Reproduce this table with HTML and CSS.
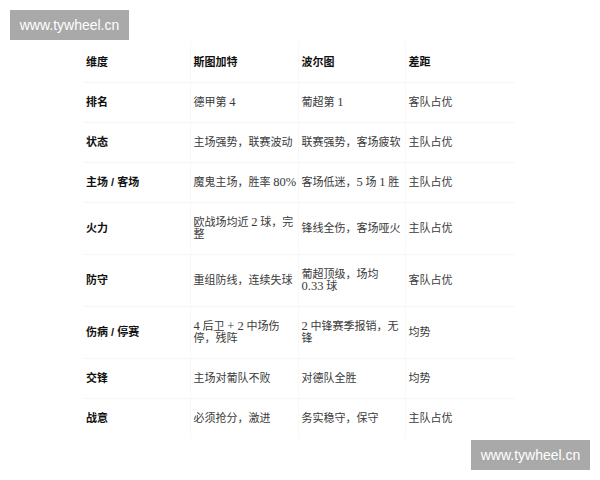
FILE: index.html
```html
<!DOCTYPE html>
<html lang="zh">
<head>
<meta charset="utf-8">
<title>斯图加特 vs 波尔图</title>
<link rel="stylesheet" href="styles.css">
</head>
<body>
<div class="page">
  <table class="compare">
    <colgroup>
      <col class="c1"><col class="c2"><col class="c3"><col class="c4">
    </colgroup>
    <thead>
      <tr><th>维度</th><th>斯图加特</th><th>波尔图</th><th>差距</th></tr>
    </thead>
    <tbody>
      <tr><th>排名</th><td>德甲第 <span class="num">4</span></td><td>葡超第 <span class="num">1</span></td><td>客队占优</td></tr>
      <tr><th>状态</th><td>主场强势，联赛波动</td><td>联赛强势，客场疲软</td><td>主队占优</td></tr>
      <tr><th>主场 / 客场</th><td>魔鬼主场，胜率 <span class="num">80%</span></td><td>客场低迷，<span class="num">5</span> 场 <span class="num">1</span> 胜</td><td>主队占优</td></tr>
      <tr class="tall"><th>火力</th><td>欧战场均近 <span class="num">2</span> 球，完<br>整</td><td>锋线全伤，客场哑火</td><td>主队占优</td></tr>
      <tr class="tall"><th>防守</th><td>重组防线，连续失球</td><td>葡超顶级，场均<br><span class="num">0.33</span> 球</td><td>客队占优</td></tr>
      <tr class="tall"><th>伤病 / 停赛</th><td><span class="num">4</span> 后卫 <span class="num">+ 2</span> 中场伤<br>停，残阵</td><td><span class="num">2</span> 中锋赛季报销，无<br>锋</td><td>均势</td></tr>
      <tr><th>交锋</th><td>主场对葡队不败</td><td>对德队全胜</td><td>均势</td></tr>
      <tr><th>战意</th><td>必须抢分，激进</td><td>务实稳守，保守</td><td>主队占优</td></tr>
    </tbody>
  </table>
</div>
<div class="mark mark-top">www.tywheel.cn</div>
<div class="mark mark-bottom">www.tywheel.cn</div>
</body>
</html>
```

FILE: styles.css
```css
html, body {
  margin: 0;
  padding: 0;
  background: #ffffff;
}

body {
  width: 600px;
  height: 480px;
  overflow: hidden;
  position: relative;
  font-family: "Liberation Serif", "Noto Sans CJK SC", serif;
  color: #333333;
}

.page {
  padding: 42px 0 0 83px;
}

.compare {
  border-collapse: collapse;
  table-layout: fixed;
  width: 432px;
  font-size: 11px;
  line-height: 12px;
}

.c1 { width: 107px; }
.c2 { width: 108px; }
.c3 { width: 107px; }
.c4 { width: 110px; }

.compare th,
.compare td {
  text-align: left;
  vertical-align: middle;
  padding: 0 0 0 3px;
  white-space: nowrap;
  border-top: 1px solid #f6f6f6;
  border-left: 1px solid #f8f8f8;
  font-weight: normal;
}

.compare thead th {
  border-top: none;
}

.compare th:first-child {
  border-left: none;
}

.compare thead th,
.compare tbody th {
  font-weight: bold;
  color: #111111;
  font-family: "Liberation Sans", "Noto Sans CJK SC", sans-serif;
}

.compare tr {
  height: 40px;
}

.compare tr.tall {
  height: 52px;
}

.compare td {
  color: #3a3a3a;
}

.num {
  font-size: 12.5px;
  line-height: 12px;
}

.mark {
  position: absolute;
  width: 119px;
  height: 30px;
  background: #a9a9a9;
  color: #ffffff;
  font-family: "Liberation Sans", sans-serif;
  font-size: 14px;
  line-height: 30px;
  text-align: center;
}

.mark-top {
  left: 10px;
  top: 10px;
}

.mark-bottom {
  left: 471px;
  top: 440px;
}
```
